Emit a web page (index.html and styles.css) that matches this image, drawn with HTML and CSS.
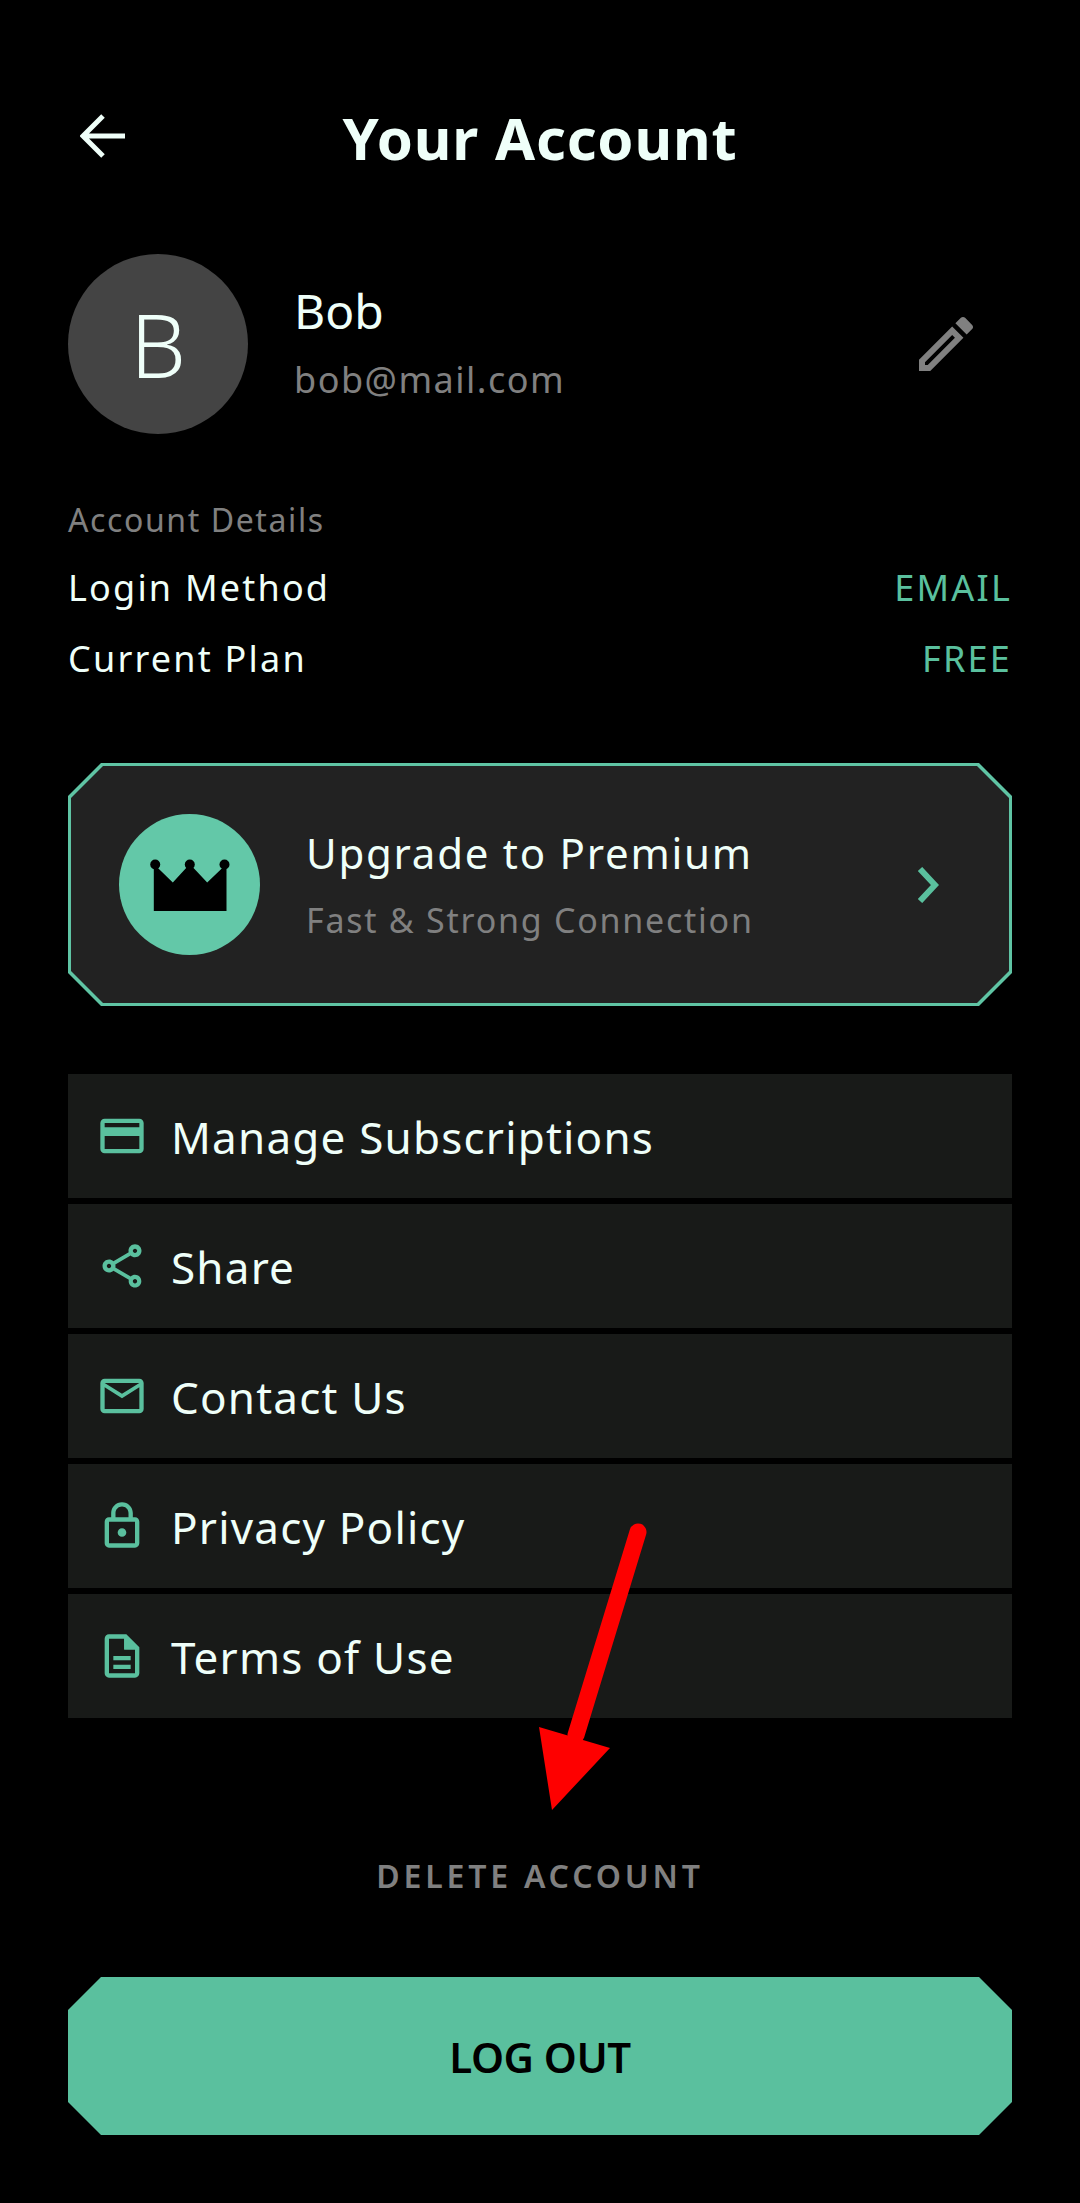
FILE: index.html
```html
<!DOCTYPE html>
<html>
<head>
<meta charset="UTF-8">
<title>Your Account</title>
<link rel="stylesheet" href="styles.css">
</head>
<body>
<div class="page">
  <header class="top">
    <svg class="back" viewBox="0 0 46 44"><path d="M45 22H3M23 2 3 22l20 20" fill="none" stroke="#effff9" stroke-width="5"/></svg>
    <h1>Your Account</h1>
    <span></span>
  </header>

  <section class="profile">
    <div class="avatar">B</div>
    <div class="who">
      <div class="name">Bob</div>
      <div class="mail">bob@mail.com</div>
    </div>
    <svg class="edit" viewBox="0 0 24 24"><path fill="#808080" d="M14.06 9.02l.92.92L5.92 19H5v-.92l9.06-9.06M17.66 3c-.25 0-.51.1-.7.29l-1.83 1.83 3.75 3.75 1.83-1.83c.39-.39.39-1.02 0-1.41l-2.34-2.34c-.2-.2-.45-.29-.71-.29zm-3.6 3.19L3 17.25V21h3.75L17.81 9.94l-3.75-3.75z"/></svg>
  </section>

  <section class="details">
    <div class="label">Account Details</div>
    <div class="row"><span>Login Method</span><span class="val">EMAIL</span></div>
    <div class="row"><span>Current Plan</span><span class="val">FREE</span></div>
  </section>

  <div class="upgrade">
    <div class="upgrade-in">
      <div class="badge">
        <svg viewBox="0 0 82 52" width="82" height="52"><path d="M4.800 52V5l19 18.500L40.800 5l17.400 18.500L77.500 5v47z"/><circle cx="6.200" cy="5.500" r="5"/><circle cx="40.800" cy="5.500" r="5"/><circle cx="75.500" cy="5.500" r="5"/></svg>
      </div>
      <div class="up-text">
        <div class="up-title">Upgrade to Premium</div>
        <div class="up-sub">Fast &amp; Strong Connection</div>
      </div>
      <svg class="chev" viewBox="0 0 22 36"><path d="M3 2l15 16L3 34" fill="none" stroke="#5ac09e" stroke-width="6"/></svg>
    </div>
  </div>

  <div class="menu">
    <div class="item">
      <svg viewBox="0 0 24 24"><path d="M20 4H4c-1.11 0-1.99.89-1.99 2L2 18c0 1.11.89 2 2 2h16c1.11 0 2-.89 2-2V6c0-1.11-.89-2-2-2zm0 14H4v-6h16v6zm0-10H4V6h16v2z"/></svg>
      <span>Manage Subscriptions</span>
    </div>
    <div class="item">
      <svg viewBox="0 0 24 24"><path d="M18 16.08c-.76 0-1.44.3-1.96.77L8.91 12.7c.05-.23.09-.46.09-.7s-.04-.47-.09-.7l7.05-4.11c.54.5 1.25.81 2.04.81 1.66 0 3-1.34 3-3s-1.34-3-3-3-3 1.34-3 3c0 .24.04.47.09.7L8.04 9.81C7.5 9.31 6.79 9 6 9c-1.66 0-3 1.34-3 3s1.34 3 3 3c.79 0 1.5-.31 2.04-.81l7.12 4.16c-.05.21-.08.43-.08.65 0 1.61 1.31 2.92 2.92 2.92s2.92-1.31 2.92-2.92c0-1.61-1.31-2.92-2.92-2.92zM18 4c.55 0 1 .45 1 1s-.45 1-1 1-1-.45-1-1 .45-1 1-1zM6 13c-.55 0-1-.45-1-1s.45-1 1-1 1 .45 1 1-.45 1-1 1zm12 7.02c-.55 0-1-.45-1-1s.45-1 1-1 1 .45 1 1-.45 1-1 1z"/></svg>
      <span>Share</span>
    </div>
    <div class="item">
      <svg viewBox="0 0 24 24"><path d="M20 4H4c-1.1 0-1.99.9-1.99 2L2 18c0 1.1.9 2 2 2h16c1.1 0 2-.9 2-2V6c0-1.1-.9-2-2-2zm0 14H4V8l8 5 8-5v10zm-8-7L4 6h16l-8 5z"/></svg>
      <span>Contact Us</span>
    </div>
    <div class="item">
      <svg viewBox="0 0 24 24"><path d="M18 8h-1V6c0-2.76-2.24-5-5-5S7 3.24 7 6v2H6c-1.1 0-2 .9-2 2v10c0 1.1.9 2 2 2h12c1.1 0 2-.9 2-2V10c0-1.1-.9-2-2-2zM9 6c0-1.66 1.34-3 3-3s3 1.34 3 3v2H9V6zm9 14H6V10h12v10zm-6-3c1.1 0 2-.9 2-2s-.9-2-2-2-2 .9-2 2 .9 2 2 2z"/></svg>
      <span>Privacy Policy</span>
    </div>
    <div class="item">
      <svg viewBox="0 0 24 24"><path d="M8 16h8v2H8zm0-4h8v2H8zm6-10H6c-1.1 0-2 .9-2 2v16c0 1.1.89 2 1.99 2H18c1.1 0 2-.9 2-2V8l-6-6zm4 18H6V4h7v5h5v11z"/><path d="M13 3h1l6 6h-7z"/></svg>
      <span>Terms of Use</span>
    </div>
  </div>

  <div class="delete">DELETE ACCOUNT</div>
  <div class="logout">LOG OUT</div>

  <!-- red annotation arrow drawn over the page -->
  <svg class="arrow" viewBox="530 1520 120 300">
    <path d="M638 1532 576 1735" fill="none" stroke="#fe0000" stroke-width="17" stroke-linecap="round"/>
    <path d="M539 1727 610 1748 552 1810z" fill="#fe0000"/>
  </svg>
</div>
</body>
</html>
```

FILE: styles.css
```css
html,body{margin:0;padding:0;background:#000}
body{font-family:"Noto Sans",sans-serif;color:#effff9}
.page{position:relative;width:1080px;height:2203px;box-sizing:border-box;padding:104px 68px 0;overflow:hidden}

.top{display:grid;grid-template-columns:1fr auto 1fr;align-items:center;height:70px;margin-bottom:80px}
.top h1{margin:-3px 0 0;font-size:58px;line-height:70px;font-weight:700;letter-spacing:.8px}
.back{width:46px;height:44px;margin-left:12px;margin-top:-6px}

.profile{display:flex;align-items:center;height:180px}
.avatar{width:180px;height:180px;border-radius:50%;background:#444;display:flex;align-items:center;justify-content:center;font-size:88px;font-weight:300}
.who{flex:1;margin-left:46px}
.name{font-size:48px;line-height:60px;margin-top:-2px}
.mail{font-size:36px;line-height:50px;margin-top:14px;color:#808080;letter-spacing:1.5px}
.edit{width:72px;height:72px;margin-right:30px}

.details{margin-top:61px}
.label{font-size:32px;line-height:50px;color:#808080;letter-spacing:1.6px}
.row{display:flex;justify-content:space-between;font-size:36px;line-height:50px;margin-top:21px;letter-spacing:2.2px}
.details .label + .row{margin-top:18px}
.val{color:#5ac09e}

.upgrade{margin-top:79px;height:243px;padding:3px;box-sizing:border-box;background:#5fc4a4;clip-path:polygon(33px 0,calc(100% - 33px) 0,100% 33px,100% calc(100% - 33px),calc(100% - 33px) 100%,33px 100%,0 calc(100% - 33px),0 33px)}
.upgrade-in{height:100%;background:#222;display:flex;align-items:center;padding-left:48px;box-sizing:border-box;clip-path:polygon(32px 0,calc(100% - 32px) 0,100% 32px,100% calc(100% - 32px),calc(100% - 32px) 100%,32px 100%,0 calc(100% - 32px),0 32px)}
.badge{width:141px;height:141px;border-radius:50%;background:#63c8a8;display:flex;align-items:center;justify-content:center;flex:none}
.up-text{flex:1;margin-left:46px}
.up-title{font-size:42px;line-height:56px;letter-spacing:1.75px}
.up-sub{font-size:34px;line-height:50px;margin-top:14px;color:#808080;letter-spacing:1.75px}
.chev{width:22px;height:36px;margin-right:70px}

.menu{margin-top:68px;display:flex;flex-direction:column;gap:6px}
.item{height:124px;background:#181a18;display:flex;align-items:center;padding-left:28px;font-size:44px;letter-spacing:1.2px}
.item span{position:relative;top:1px}
.item svg{width:52px;height:52px;fill:#5ac09e;margin-right:23px;flex:none}

.delete{margin-top:138px;text-align:center;font-size:32px;line-height:40px;font-weight:600;letter-spacing:3.8px;color:#808080}
.logout{margin-top:81px;height:158px;background:#5ac09e;color:#000;display:flex;align-items:center;justify-content:center;font-size:42px;font-weight:600;letter-spacing:-.5px;clip-path:polygon(33px 0,calc(100% - 33px) 0,100% 33px,100% calc(100% - 33px),calc(100% - 33px) 100%,33px 100%,0 calc(100% - 33px),0 33px)}

.arrow{position:absolute;left:530px;top:1520px;width:120px;height:300px}
```
